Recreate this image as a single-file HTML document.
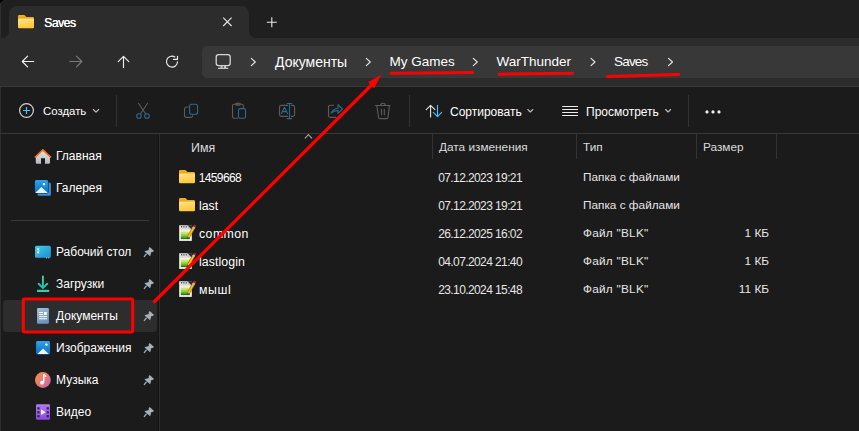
<!DOCTYPE html>
<html><head><meta charset="utf-8">
<style>
*{margin:0;padding:0;box-sizing:border-box}
html,body{width:859px;height:431px;overflow:hidden;background:#1b1b1b;font-family:"Liberation Sans",sans-serif;color:#fff}
.a{position:absolute}
.t{position:absolute;white-space:nowrap;line-height:1}
#title{left:0;top:0;width:859px;height:38px;background:#1f1f1f;border-top-left-radius:5px}
#tab{left:9px;top:6px;width:240px;height:32px;background:#2c2c2c;border-radius:8px 8px 0 0}
#nav{left:0;top:38px;width:859px;height:48px;background:#2c2c2c}
#addr{left:202px;top:46px;width:657px;height:32px;background:#383838;border-radius:5px 0 0 5px}
#navline{left:0;top:86px;width:859px;height:1px;background:#383838}
#toolline{left:0;top:133px;width:859px;height:1px;background:#383838}
.sep{position:absolute;width:1px;background:#333}
.side{font-size:12px;color:#fff}
.hdr{font-size:11.8px;color:#dcdcdc}
.cell{font-size:11.8px;color:#fff}
.ft{letter-spacing:0.25px}
.dim{color:#e6e6e6}
</style></head><body>
<div class="a" style="left:0;top:0;width:8px;height:8px;background:#000"></div><div id="title" class="a"></div>
<div id="tab" class="a"></div>
<div class="a" style="left:1px;top:30px;width:8px;height:8px;background:#2c2c2c"></div>
<div class="a" style="left:1px;top:29px;width:8px;height:9px;background:#1f1f1f;border-bottom-right-radius:7px"></div>
<div class="a" style="left:249px;top:30px;width:8px;height:8px;background:#2c2c2c"></div>
<div class="a" style="left:249px;top:29px;width:620px;height:9px;background:#1f1f1f;border-bottom-left-radius:7px"></div>
<div class="a" style="left:0;top:3px;width:1px;height:428px;background:#2e2e2e"></div>
<div id="nav" class="a"></div>
<div id="addr" class="a"></div>
<div id="navline" class="a"></div>
<div id="toolline" class="a"></div>

<!-- tab content -->
<div class="t" style="left:44px;top:17px;font-size:12.2px;letter-spacing:-0.5px;text-shadow:0.35px 0 0 #fff">Saves</div>

<!-- breadcrumbs -->
<div class="t" style="left:275px;top:55px;font-size:14px">Документы</div>
<div class="t" style="left:389.5px;top:55px;font-size:13.5px">My Games</div>
<div class="t" style="left:496.5px;top:55px;font-size:13.5px">WarThunder</div>
<div class="t" style="left:614px;top:55px;font-size:13.5px;letter-spacing:-0.8px">Saves</div>

<!-- toolbar -->
<div class="t" style="left:43px;top:106px;font-size:11.4px">Создать</div>
<div class="sep" style="left:116px;top:95px;height:32px"></div>
<div class="sep" style="left:409px;top:95px;height:32px"></div>
<div class="t" style="left:450px;top:106px;font-size:12px">Сортировать</div>
<div class="t" style="left:586px;top:106px;font-size:12px">Просмотреть</div>
<div class="sep" style="left:688px;top:95px;height:32px"></div>

<!-- sidebar -->
<div class="a" style="left:158px;top:134px;width:1px;height:297px;background:#151515"></div><div class="a" style="left:159px;top:134px;width:1px;height:297px;background:#2e2e2e"></div>
<div class="t side" style="left:56px;top:150px">Главная</div>
<div class="t side" style="left:56px;top:182px">Галерея</div>
<div class="a" style="left:11px;top:220px;width:138px;height:1px;background:#3a3a3a"></div>
<div class="t side" style="left:56px;top:246px">Рабочий стол</div>
<div class="t side" style="left:56px;top:278px">Загрузки</div>
<div class="a" style="left:3px;top:300px;width:154px;height:32px;background:#2d2d2d;border-radius:4px"></div>
<div class="t side" style="left:56px;top:310px">Документы</div>
<div class="t side" style="left:56px;top:342px">Изображения</div>
<div class="t side" style="left:56px;top:374px">Музыка</div>
<div class="t side" style="left:56px;top:406px">Видео</div>

<!-- header -->
<div class="t hdr" style="left:191px;top:141.5px;font-size:12.4px">Имя</div>
<div class="sep" style="left:432px;top:134px;height:25px"></div>
<div class="t hdr" style="left:439px;top:142px">Дата изменения</div>
<div class="sep" style="left:576px;top:134px;height:25px"></div>
<div class="t hdr" style="left:583px;top:142px">Тип</div>
<div class="sep" style="left:696px;top:134px;height:25px"></div>
<div class="t hdr" style="left:703px;top:142px">Размер</div>
<div class="sep" style="left:776px;top:134px;height:25px"></div>

<!-- rows -->
<div class="t cell" style="left:198.8px;top:171.5px;font-size:12px;letter-spacing:-0.65px">1459668</div>
<div class="t cell dim" style="left:438.2px;top:171.5px;font-size:12px;letter-spacing:-0.6px">07.12.2023 19:21</div>
<div class="t cell dim" style="left:583px;top:172px">Папка с файлами</div>
<div class="t cell" style="left:199px;top:199.5px;font-size:12.3px">last</div>
<div class="t cell dim" style="left:438.2px;top:199.5px;font-size:12px;letter-spacing:-0.6px">07.12.2023 19:21</div>
<div class="t cell dim" style="left:583px;top:200px">Папка с файлами</div>
<div class="t cell" style="left:199px;top:227.5px;font-size:12.3px;letter-spacing:0.45px">common</div>
<div class="t cell dim" style="left:438.2px;top:227.5px;font-size:12px;letter-spacing:-0.6px">26.12.2025 16:02</div>
<div class="t cell dim ft" style="left:583px;top:228px">Файл "BLK"</div>
<div class="t cell" style="left:199px;top:255.5px;font-size:12.3px;letter-spacing:0.1px">lastlogin</div>
<div class="t cell dim" style="left:438.2px;top:255.5px;font-size:12px;letter-spacing:-0.6px">04.07.2024 21:40</div>
<div class="t cell dim ft" style="left:583px;top:256px">Файл "BLK"</div>
<div class="t cell" style="left:199px;top:283.5px;font-size:12.3px;letter-spacing:0.6px">мышl</div>
<div class="t cell dim" style="left:438.2px;top:283.5px;font-size:12px;letter-spacing:-0.6px">23.10.2024 15:48</div>
<div class="t cell dim ft" style="left:583px;top:284px">Файл "BLK"</div>

<div class="t cell dim" style="left:700px;top:228px;width:69px;text-align:right">1 КБ</div>
<div class="t cell dim" style="left:700px;top:256px;width:69px;text-align:right">1 КБ</div>
<div class="t cell dim" style="left:700px;top:284px;width:69px;text-align:right">11 КБ</div>
<!-- icons -->
<svg class="a" style="left:0;top:0" width="859" height="431">
<defs>
<linearGradient id="fold" x1="0" y1="0" x2="0.3" y2="1"><stop offset="0" stop-color="#ffe28a"/><stop offset="1" stop-color="#ffc83a"/></linearGradient>
<linearGradient id="foldtab" x1="0" y1="0" x2="0" y2="1"><stop offset="0" stop-color="#f2b01e"/><stop offset="1" stop-color="#e9a40a"/></linearGradient>
<linearGradient id="gblue" x1="0" y1="0" x2="0" y2="1"><stop offset="0" stop-color="#2aa4ec"/><stop offset="1" stop-color="#0e6fc4"/></linearGradient>
<linearGradient id="gdesk" x1="0" y1="0" x2="1" y2="1"><stop offset="0" stop-color="#40cdec"/><stop offset="1" stop-color="#1c8ed0"/></linearGradient>
<linearGradient id="gdl" x1="0" y1="0" x2="0" y2="1"><stop offset="0" stop-color="#3fdca0"/><stop offset="1" stop-color="#21b8b4"/></linearGradient>
<linearGradient id="gdoc" x1="0" y1="0" x2="0.4" y2="1"><stop offset="0" stop-color="#a3c0e0"/><stop offset="1" stop-color="#6d92bf"/></linearGradient>
<linearGradient id="gmus" x1="0" y1="0.1" x2="1" y2="0.9"><stop offset="0" stop-color="#f8904a"/><stop offset="0.65" stop-color="#e07286"/><stop offset="1" stop-color="#bb62c8"/></linearGradient>
<linearGradient id="gvid" x1="0" y1="0" x2="0" y2="1"><stop offset="0" stop-color="#b07cf0"/><stop offset="1" stop-color="#8a4bdc"/></linearGradient>
<linearGradient id="ghome" x1="0" y1="0" x2="0" y2="1"><stop offset="0" stop-color="#dfe3e6"/><stop offset="1" stop-color="#b8bcc0"/></linearGradient>
<linearGradient id="gnote" x1="0" y1="0" x2="0" y2="1"><stop offset="0" stop-color="#d6ea68"/><stop offset="0.55" stop-color="#8ccc36"/><stop offset="0.85" stop-color="#2e9a1e"/><stop offset="1" stop-color="#0c5e0c"/></linearGradient>
<g id="folder">
<path d="M0 1.3 Q0 0 1.3 0 H6 Q6.6 0 7 0.4 L8.4 1.9 H14.7 Q16 1.9 16 3.2 V6 H0Z" fill="url(#foldtab)"/>
<rect x="0" y="3.7" width="16" height="9.6" rx="1.2" fill="url(#fold)"/>
<rect x="0" y="3.7" width="16" height="0.7" fill="#ffeaa8" opacity="0.7"/>
</g>
<g id="note">
<rect x="0.2" y="0.3" width="12.6" height="15.6" fill="#f6f6f6"/>
<rect x="1.2" y="1.2" width="7.6" height="4" fill="#dcdcdc"/>
<g fill="#3c3c3c"><rect x="2" y="0.9" width="1.2" height="1.6" rx="0.5"/><rect x="4.3" y="0.9" width="1.2" height="1.6" rx="0.5"/><rect x="6.6" y="0.9" width="1.2" height="1.6" rx="0.5"/></g>
<path d="M8.6 0.2 L12.9 4.5 V0.2Z" fill="#1b1b1b"/>
<path d="M8.6 0.3 V4.5 H12.8Z" fill="#c8c8c8"/><path d="M8.6 0.3 L12.8 4.5" stroke="#555" stroke-width="0.6"/>
<rect x="1.8" y="6.5" width="9.2" height="7.6" fill="url(#gnote)"/>
<rect x="1.8" y="7.6" width="9.2" height="0.8" fill="#eef6a0" opacity="0.6"/>
<path d="M9.1 12.5 L14.9 2.4" stroke="#a86000" stroke-width="3"/>
<path d="M9.1 12.5 L14.9 2.4" stroke="#ffc21a" stroke-width="1.7"/>
<path d="M14.3 3.3 L15.3 1.6" stroke="#a8bccc" stroke-width="2.6"/>
<circle cx="15.7" cy="0.9" r="1.25" fill="#cc1a1a"/>
<path d="M8.3 13.9 L9.3 12.2" stroke="#6a4a20" stroke-width="1.6"/>
</g>
<g id="pin"><path d="M5.8 0 L10 4 L8.8 5 L7.4 4.9 L6.1 9.2 L0.4 4.3 L4.8 3 L4.7 1.2Z" fill="#a6b0ba"/><path d="M2.6 6.7 L0 9.8" stroke="#a6b0ba" stroke-width="1.3"/></g>
</defs>

<!-- tab folder -->
<use href="#folder" x="18" y="15"/>
<!-- close x & plus -->
<path d="M223.2 17.6 L231.6 26 M231.6 17.6 L223.2 26" stroke="#e8e8e8" stroke-width="1.1"/>
<path d="M266.8 22.3 H276.8 M271.8 17.3 V27.3" stroke="#e8e8e8" stroke-width="1.1"/>

<!-- nav arrows -->
<g fill="none" stroke="#f0f0f0" stroke-width="1.15" stroke-linecap="round" stroke-linejoin="round">
<path d="M33.7 61.5 H22.3 M27.6 56.2 L22.3 61.5 L27.6 66.8"/>
<path d="M123.5 67.6 V56.4 M118.2 61.7 L123.5 56.4 L128.8 61.7"/>
<path d="M174.8 56.9 A5.5 5.5 0 1 0 177.5 61.8" />
<path d="M173.4 59.3 H177.5 V56.2"/>
</g>
<g fill="none" stroke="#7a7a7a" stroke-width="1.15" stroke-linecap="round" stroke-linejoin="round">
<path d="M69.9 61.5 H81.8 M76.5 56.2 L81.8 61.5 L76.5 66.8"/>
</g>
<!-- monitor -->
<g fill="none" stroke="#d6d6d6" stroke-width="1.3">
<rect x="216.2" y="54.6" width="14" height="11" rx="2.4"/>
</g>
<path d="M218 68.3 H228.2" stroke="#d6d6d6" stroke-width="1.2"/>
<rect x="220.5" y="65.5" width="2" height="2.5" fill="#c8c8c8"/><rect x="224" y="65.5" width="2" height="2.5" fill="#c8c8c8"/>
<!-- chevrons -->
<g fill="none" stroke="#e6e6e6" stroke-width="1.1" stroke-linecap="round" stroke-linejoin="round">
<path d="M251.3 58.3 L255.3 62 L251.3 65.7"/>
<path d="M366.3 58.3 L370.3 62 L366.3 65.7"/>
<path d="M473.3 58.3 L477.3 62 L473.3 65.7"/>
<path d="M591 58.3 L595 62 L591 65.7"/>
<path d="M668.5 58.3 L672.5 62 L668.5 65.7"/>
</g>

<!-- toolbar -->
<circle cx="26.5" cy="110.5" r="6.9" fill="none" stroke="#d4d4d4" stroke-width="1.2"/>
<path d="M23 110.5 H30.1 M26.5 107 V114.1" stroke="#4cc2ff" stroke-width="1.2"/>
<path d="M93.3 109.5 L96 112.2 L98.7 109.5" fill="none" stroke="#bdbdbd" stroke-width="1.1" stroke-linecap="round" stroke-linejoin="round"/>
<g fill="none" stroke-width="1.1" stroke-linecap="round" stroke-linejoin="round">
<!-- scissors -->
<path d="M138.5 103.3 L145.4 113.5 M147.6 103.3 L140.7 113.5" stroke="#5c5c5c"/>
<circle cx="139" cy="116" r="2.3" stroke="#2c6a8f"/><circle cx="147" cy="116" r="2.3" stroke="#2c6a8f"/>
<!-- copy -->
<rect x="189.6" y="104.3" width="8" height="10" rx="2" stroke="#2c6a8f"/>
<path d="M188.3 107 H186.3 Q184.5 107 184.5 109 V115.5 Q184.5 117.4 186.5 117.4 H190.8 Q192.8 117.4 192.8 115.6" stroke="#5c5c5c"/>
<!-- paste -->
<path d="M237.8 118.3 H234.2 Q232.5 118.3 232.5 116.5 V105.8 Q232.5 104.2 234.2 104.2 H241.8 Q243.4 104.2 243.4 105.8 V108.2" stroke="#5c5c5c"/>
<ellipse cx="238" cy="104.2" rx="2.4" ry="1.1" stroke="#5c5c5c"/>
<rect x="238.5" y="108.6" width="7" height="9.7" rx="1.6" stroke="#2c6a8f"/>
<!-- rename -->
<path d="M287.6 105.4 H281.2 Q279.5 105.4 279.5 107.2 V114.6 Q279.5 116.4 281.2 116.4 H287.6 M291.4 105.4 H292.8 Q294.6 105.4 294.6 107.2 V114.6 Q294.6 116.4 292.8 116.4 H291.4" stroke="#5c5c5c"/>
<path d="M281.3 113.8 L284.5 107.2 L287.7 113.8 M282.5 111.6 H286.5" stroke="#2c6a8f"/>
<path d="M289.5 103.5 V118.6 M287.3 103.5 H291.7 M287.3 118.6 H291.7" stroke="#2c6a8f"/>
<!-- share -->
<path d="M333.5 105.3 H330.3 Q328.5 105.3 328.5 107.1 V115.6 Q328.5 117.4 330.3 117.4 H336" stroke="#5c5c5c"/>
<path d="M331.2 113.2 Q332.5 108.8 338 108.2 V104.6 L342.4 109 L338 113.4 V110.4 Q334 110.4 331.2 113.2Z" stroke="#2c6a8f"/>
<!-- trash -->
<path d="M375.6 105.5 H390 M380.7 105.5 Q380.7 103.2 383 103.2 Q385.3 103.2 385.3 105.5 M376.9 105.5 L378.5 117.4 Q378.7 118.6 380 118.6 H386.5 Q387.8 118.6 388 117.4 L389.4 105.5 M381.5 109.3 V114.8 M384.3 109.3 V114.8" stroke="#5c5c5c"/>
<!-- sort -->
<path d="M430.6 117 V105.4 M426.2 109.6 L430.6 105.3 L434.9 109.6" stroke="#e6e6e6"/>
<path d="M437.5 105.2 V116.5 M433.3 112.3 L437.5 116.6 L441.7 112.3" stroke="#4cc2ff"/>
</g>
<path d="M527.8 109.5 L530.3 112 L532.8 109.5" fill="none" stroke="#bdbdbd" stroke-width="1.1" stroke-linecap="round" stroke-linejoin="round"/>
<path d="M562.2 106.5 H578 M562.2 109.5 H578 M562.2 112.5 H578 M562.2 115.5 H578" stroke="#ececec" stroke-width="1"/>
<path d="M665.6 109.5 L668.1 112 L670.6 109.5" fill="none" stroke="#bdbdbd" stroke-width="1.1" stroke-linecap="round" stroke-linejoin="round"/>
<circle cx="707" cy="111.9" r="1.6" fill="#f0f0f0"/><circle cx="713" cy="111.9" r="1.6" fill="#f0f0f0"/><circle cx="719" cy="111.9" r="1.6" fill="#f0f0f0"/>

<!-- sidebar icons -->
<!-- home -->
<path d="M35.8 157 L42.9 150.3 L50 157 V162.4 Q50 163.8 48.6 163.8 H45 V158.2 H41 V163.8 H37.2 Q35.8 163.8 35.8 162.4Z" fill="url(#ghome)"/>
<path d="M35.3 157 L42.9 149.8 L50.6 157" fill="none" stroke="#f7700c" stroke-width="1.7" stroke-linejoin="round" stroke-linecap="round"/>
<!-- gallery -->
<rect x="37.5" y="182.5" width="13.4" height="13.3" rx="1.5" fill="#3d8ee0"/>
<rect x="34.4" y="179.4" width="14.2" height="14.1" rx="1.8" fill="#1b1b1b"/><rect x="34.9" y="179.9" width="13.2" height="13.1" rx="1.5" fill="url(#gblue)"/>
<path d="M35.2 193 L41.4 187.1 L47.8 193Z" fill="#e8f4ff"/>
<rect x="42.9" y="183" width="2.2" height="2.2" fill="#fff"/>
<!-- desktop -->
<rect x="35" y="245.8" width="15.9" height="12" rx="1.6" fill="url(#gdesk)"/>
<rect x="37.2" y="248.4" width="2" height="2" fill="#fff"/><rect x="37.2" y="251.3" width="2" height="2" fill="#fff"/>
<rect x="46.1" y="257.4" width="1" height="1" fill="#ddd"/><rect x="48.2" y="257.4" width="1" height="1" fill="#ddd"/>
<!-- download -->
<g stroke="url(#gdl)" stroke-width="1.9" fill="none" stroke-linecap="round" stroke-linejoin="round">
<path d="M42.9 276.5 V287.5 M38.6 283.8 L42.9 288 L47.3 283.8"/>
</g>
<rect x="37" y="289.8" width="12.2" height="2.2" fill="#36cfa6"/>
<!-- documents -->
<rect x="37" y="308" width="11.9" height="15.8" rx="1.2" fill="url(#gdoc)"/>
<path d="M39.1 312.5 H43 M39.1 314.5 H43 M39.1 316.7 H47 M39.1 318.8 H47" stroke="#fff" stroke-width="1"/>
<rect x="44" y="312" width="2.8" height="2.9" fill="#fff"/>
<!-- images -->
<rect x="36.1" y="341.1" width="13.9" height="13.3" rx="1.4" fill="url(#gblue)"/>
<path d="M37.5 354 L43.1 348.5 L48.7 354Z" fill="#eef6ff"/>
<circle cx="46.4" cy="344.6" r="1.2" fill="#fff"/>
<!-- music -->
<circle cx="42.9" cy="380" r="7.9" fill="url(#gmus)"/>
<path d="M43.7 374.5 V382.6" stroke="#fff" stroke-width="1.4"/>
<circle cx="42" cy="382.7" r="1.9" fill="#fff"/>
<path d="M43.7 374.3 Q45.5 375 45.8 377" stroke="#fff" stroke-width="1.4" fill="none"/>
<!-- video -->
<rect x="36" y="404.2" width="14" height="15.6" rx="1.2" fill="url(#gvid)"/>
<g fill="#3a1f60"><rect x="37.3" y="407.2" width="2.3" height="2.3"/><rect x="37.3" y="411.2" width="2.3" height="2.2"/><rect x="37.3" y="415" width="2.3" height="2.3"/><rect x="46.6" y="407.2" width="2.3" height="2.3"/><rect x="46.6" y="411.2" width="2.3" height="2.2"/><rect x="46.6" y="415" width="2.3" height="2.3"/></g>
<path d="M41 409.3 L45.8 412.2 L41 415.1Z" fill="#f4eeff"/>
<!-- pins -->
<use href="#pin" x="144" y="247"/>
<use href="#pin" x="144" y="279"/>
<use href="#pin" x="144" y="311"/>
<use href="#pin" x="144" y="343"/>
<use href="#pin" x="144" y="375"/>
<use href="#pin" x="144" y="407"/>

<!-- header caret -->
<path d="M305.2 138.1 L308.4 134.6 L311.8 138.1" fill="none" stroke="#a8a8a8" stroke-width="1.1" stroke-linecap="round" stroke-linejoin="round"/>

<!-- file icons -->
<use href="#folder" x="179" y="170"/>
<use href="#folder" x="179" y="198"/>
<use href="#note" x="179" y="225"/>
<use href="#note" x="179" y="253"/>
<use href="#note" x="179" y="281"/>
</svg>

<!-- annotations -->
<svg class="a" style="left:0;top:0" width="859" height="431">
<g stroke="#ff0000" stroke-linecap="round" fill="none">
<path d="M390.9 73.2 L472.5 72.5" stroke-width="3"/>
<path d="M499 74.2 L572.5 73.3" stroke-width="3"/>
<path d="M607.6 76.5 L678.7 74.4" stroke-width="3"/>
<path d="M153.5 302.5 L372 84.5" stroke-width="3.2" stroke-linecap="butt"/>
<rect x="23.3" y="299" width="109.4" height="33" rx="1.2" stroke-width="3"/>
</g>
<path d="M381.2 74.8 L368 82.3 L374.2 88.2 Z" fill="#ff0000"/>
</svg>
</body></html>
